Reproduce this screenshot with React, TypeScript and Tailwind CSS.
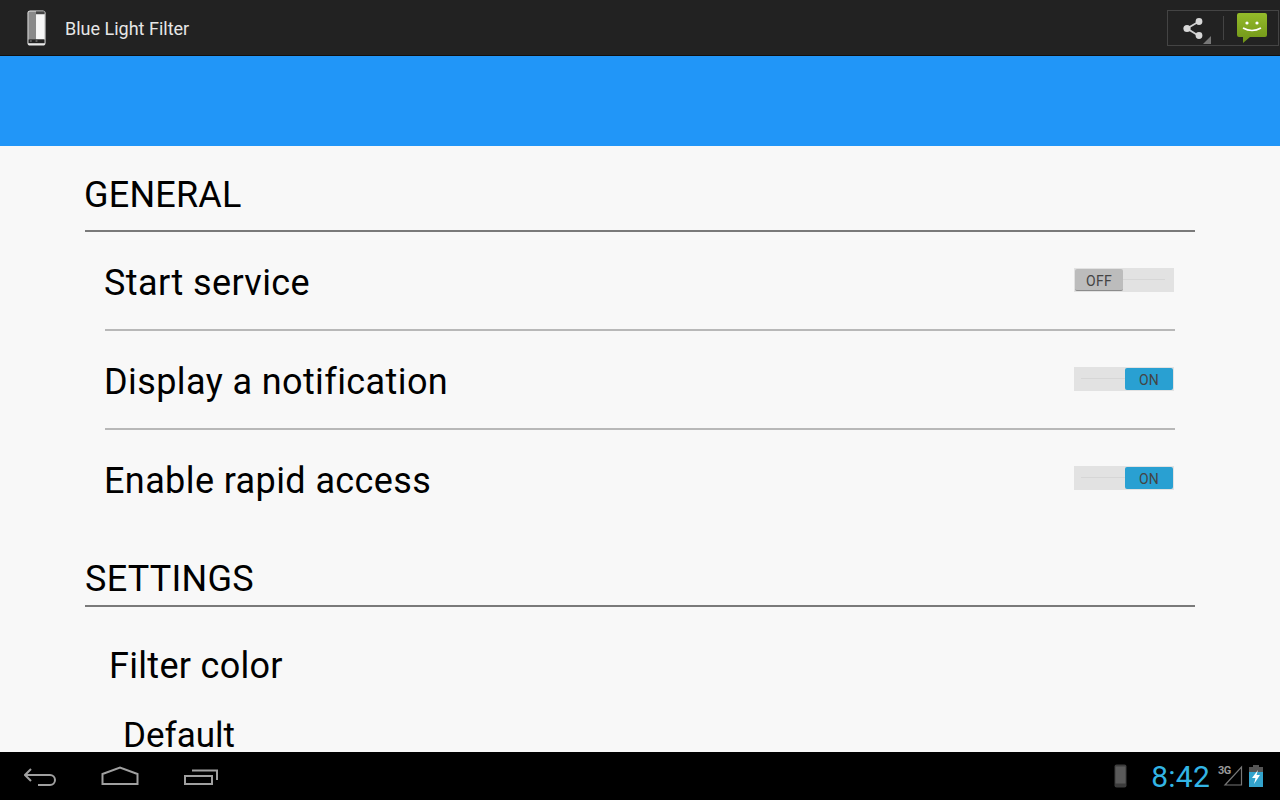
import React from "react";

function PhoneIcon({ className }: { className?: string }) {
  return (
    <svg viewBox="0 0 20 38" className={className}>
      <rect x="0.5" y="0.5" width="19" height="37" rx="3" fill="#e8e8e8" />
      <rect x="1.5" y="1.5" width="17" height="30" rx="1.5" fill="#8a8a8a" />
      <rect x="9.5" y="4" width="9" height="27" fill="#f7f7f7" />
      <rect x="9.5" y="1.5" width="9" height="3" fill="#444" />
      <rect x="1.5" y="31" width="17" height="4" fill="#222" />
      <rect x="3" y="32" width="2" height="1.4" fill="#777" />
      <rect x="9" y="32" width="2" height="1.4" fill="#777" />
    </svg>
  );
}

function Toggle({ on }: { on: boolean }) {
  return (
    <div className={`w-[100px] h-6 bg-[#e2e2e2] flex items-center ${on ? "pr-px pl-[7px]" : "pl-px pr-[9px]"}`}>
      {on && <div className="flex-1 h-px bg-[#d6d6d6]" />}
      <div className={`w-[48px] h-[22px] pt-1 rounded-[2px] flex items-center justify-center text-[14px] tracking-[0.3px] text-[#444] ${on ? "bg-[#29a0d2]" : "bg-[#bcbcbc] border-b border-[#8c8c8c]"}`}>
        {on ? "ON" : "OFF"}
      </div>
      {!on && <div className="flex-1 h-px bg-[#d6d6d6]" />}
    </div>
  );
}

function Row({ label, on, divider }: { label: string; on: boolean; divider?: boolean }) {
  return (
    <div className={`h-[99px] mx-5 flex items-center justify-between pr-px border-b-2 ${divider ? "border-[#b8b8b8]" : "border-transparent"}`}>
      <span className="-ml-px mt-1 text-[36px] tracking-[0.4px] text-black">{label}</span>
      <div className="mb-[2px]"><Toggle on={on} /></div>
    </div>
  );
}

export default function App() {
  return (
    <div className="w-[1280px] h-[800px] overflow-hidden flex flex-col bg-[#f8f8f8]" style={{ fontFamily: "Roboto, sans-serif" }}>
      {/* Action bar */}
      <header className="h-14 shrink-0 bg-[#222222] border-b border-[#111] flex items-center pl-[27px] pr-px">
        <PhoneIcon className="w-[19px] h-[38px]" />
        <span className="ml-[19px] mt-[2px] text-[18px] text-[#e6e6e6]">Blue Light Filter</span>
        <div className="ml-auto w-[112px] h-9 mt-px border border-[#444] flex items-center">
          <div className="relative w-[55px] h-full flex items-center pl-[15px]">
            <svg viewBox="0 0 20 21" className="w-5 h-[21px]">
              <path d="M16 3.5 L4 10.5 L16 18" fill="none" stroke="#d0d0d0" strokeWidth="1.8" />
              <circle cx="16" cy="3.5" r="3.4" fill="#d8d8d8" />
              <circle cx="4" cy="10.5" r="3.6" fill="#d8d8d8" />
              <circle cx="16" cy="17.5" r="3.4" fill="#d8d8d8" />
            </svg>
            <div className="absolute right-[12px] bottom-px w-2 h-2 bg-[#777] [clip-path:polygon(100%_0,100%_100%,0_100%)]" />
          </div>
          <div className="w-px h-6 bg-[#444]" />
          <svg viewBox="0 0 30 31" className="ml-[13px] w-[30px] h-[31px]">
            <defs>
              <linearGradient id="bubble" x1="0" y1="0" x2="0" y2="1">
                <stop offset="0" stopColor="#94bb2a" />
                <stop offset="1" stopColor="#6f9418" />
              </linearGradient>
            </defs>
            <path d="M2 0 H28 a2 2 0 0 1 2 2 V22 a2 2 0 0 1 -2 2 H13 L6 30 V24 H2 a2 2 0 0 1 -2 -2 V2 a2 2 0 0 1 2 -2 Z" fill="url(#bubble)" />
            <circle cx="10" cy="10" r="1.6" fill="#fff" />
            <circle cx="20" cy="10" r="1.6" fill="#fff" />
            <path d="M6 15 Q15 20 24 15" fill="none" stroke="#fff" strokeWidth="1.6" />
          </svg>
        </div>
      </header>

      <div className="h-[90px] shrink-0 bg-[#2196f8]" />

      {/* Preferences */}
      <main className="flex-1 min-h-0 overflow-hidden pl-[85px] pr-[85px]">
        <div className="h-[86px] pb-[14px] flex items-end border-b-2 border-[#7a7a7a] text-[36px] leading-[42px] text-black">
          <span className="-ml-px tracking-[0.2px]">GENERAL</span>
        </div>
        <Row label="Start service" on={false} divider />
        <Row label="Display a notification" on divider />
        <Row label="Enable rapid access" on />
        <div className="h-[78px] pb-[5px] flex items-end border-b-2 border-[#7a7a7a] text-[36px] leading-[42px] tracking-[0.25px] text-black">SETTINGS</div>
        <div className="mt-[38px] ml-6 text-[36px] leading-[42px] tracking-[0.3px] text-black">Filter color</div>
        <div className="mt-8 ml-[38px] text-[35px] leading-[34px] text-black">Default</div>
      </main>

      {/* System bar */}
      <footer className="h-12 shrink-0 bg-black flex items-center pl-6 pr-[16px]">
        <svg viewBox="0 0 34 20" className="w-[34px] h-5">
          <path d="M7 3 L1 9 L7 15 M1 9 H26 a5 5 0 0 1 0 10 H14" fill="none" stroke="#a0a0a0" strokeWidth="2" />
        </svg>
        <svg viewBox="0 0 38 20" className="ml-[43px] w-[38px] h-5">
          <path d="M1.5 18 V8 L19 1.5 L36.5 8 V18 Z" fill="none" stroke="#a0a0a0" strokeWidth="2" />
        </svg>
        <svg viewBox="0 0 36 20" className="ml-[45px] w-[36px] h-5">
          <rect x="1" y="10" width="27" height="8" fill="none" stroke="#a0a0a0" strokeWidth="2" />
          <path d="M8 4.5 H33 V14" fill="none" stroke="#a0a0a0" strokeWidth="2" />
        </svg>
        <div className="ml-auto flex items-center">
          <svg viewBox="0 0 13 24" className="w-[13px] h-6">
            <rect x="0.5" y="0.5" width="12" height="23" rx="2" fill="#3c3c3c" />
            <rect x="1.5" y="2.5" width="10" height="17" fill="#5a5a5a" />
          </svg>
          <span className="ml-6 text-[30px] tracking-[0.25px] text-[#33b5e5]">8:42</span>
          <div className="relative ml-[7px] w-[26px] h-6 mb-[2px]">
            <svg viewBox="0 0 26 24" className="w-[26px] h-6">
              <path d="M24.5 4 V22 H8 Z" fill="none" stroke="#777" strokeWidth="1.2" />
            </svg>
            <span className="absolute left-px top-[2px] text-[11px] leading-none font-bold tracking-[-0.5px] text-[#999]">3G</span>
          </div>
          <svg viewBox="0 0 16 22" className="ml-[5px] w-[16px] h-[22px]">
            <rect x="5" y="0" width="6" height="3" fill="#555" />
            <rect x="1" y="2" width="14" height="20" fill="#555" />
            <rect x="1" y="7" width="14" height="15" fill="#33a3cc" />
            <path d="M10 5 L4 13 H7.5 L6 19 L12 10 H8.5 Z" fill="#fff" />
          </svg>
        </div>
      </footer>
    </div>
  );
}
